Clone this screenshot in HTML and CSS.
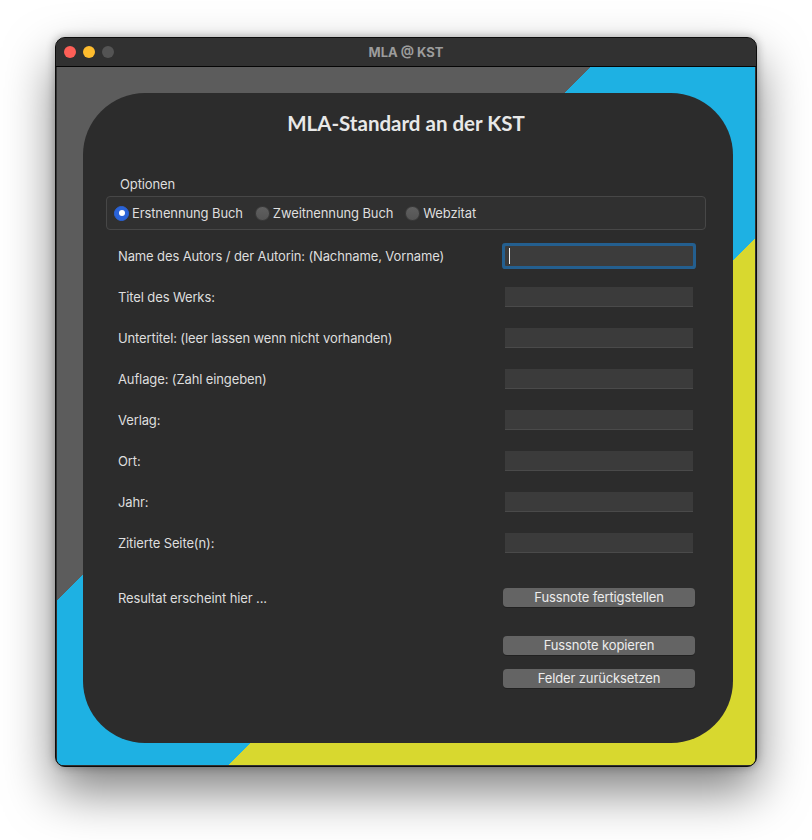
FILE: index.html
```html
<!DOCTYPE html>
<html lang="de">
<head>
<meta charset="utf-8">
<title>MLA @ KST</title>
<link rel="stylesheet" href="styles.css">
</head>
<body>
<div class="window">
  <div class="titlebar">
    <div class="lights">
      <span class="light red"></span>
      <span class="light yellow"></span>
      <span class="light grey"></span>
    </div>
    <div class="wtitle">MLA @ KST</div>
  </div>
  <div class="content">
    <div class="card">
      <h1 class="heading">MLA-Standard an der KST</h1>
      <div class="group-label">Optionen</div>
      <div class="group">
        <label class="radio"><span class="dot on"></span>Erstnennung Buch</label>
        <label class="radio"><span class="dot"></span>Zweitnennung Buch</label>
        <label class="radio"><span class="dot"></span>Webzitat</label>
      </div>
      <div class="rows">
        <div class="row"><span class="lbl">Name des Autors / der Autorin: (Nachname, Vorname)</span><div class="field focus"><span class="caret"></span></div></div>
        <div class="row"><span class="lbl">Titel des Werks:</span><div class="field"></div></div>
        <div class="row"><span class="lbl">Untertitel: (leer lassen wenn nicht vorhanden)</span><div class="field"></div></div>
        <div class="row"><span class="lbl">Auflage: (Zahl eingeben)</span><div class="field"></div></div>
        <div class="row"><span class="lbl">Verlag:</span><div class="field"></div></div>
        <div class="row"><span class="lbl">Ort:</span><div class="field"></div></div>
        <div class="row"><span class="lbl">Jahr:</span><div class="field"></div></div>
        <div class="row"><span class="lbl">Zitierte Seite(n):</span><div class="field"></div></div>
      </div>
      <div class="result-row">
        <span class="lbl">Resultat erscheint hier ...</span>
        <button class="btn">Fussnote fertigstellen</button>
      </div>
      <div class="actions">
        <button class="btn">Fussnote kopieren</button>
        <button class="btn">Felder zurücksetzen</button>
      </div>
    </div>
  </div>
</div>
</body>
</html>
```
FILE: styles.css
```css
html, body {
  margin: 0;
  padding: 0;
  background: #ffffff;
}
html {
  height: 100%;
}
body {
  min-height: 840px;
  box-sizing: border-box;
  padding: 37px 0 0 55px;
  font-family: "Inter", "Liberation Sans", sans-serif;
  font-size: 13px;
  letter-spacing: -0.12px;
  overflow: hidden;
}
.window {
  width: 700px;
  border: 1px solid #0c0c0c;
  border-radius: 10px;
  overflow: hidden;
  background: #303030;
  box-shadow: 0 24px 50px rgba(0,0,0,0.5), 0 0 10px rgba(0,0,0,0.3);
}
.titlebar {
  height: 28px;
  border-bottom: 1px solid #050505;
  background: #313131;
  display: flex;
  align-items: center;
  position: relative;
}
.lights {
  display: flex;
  gap: 7px;
  padding-left: 8px;
}
.light {
  width: 12px;
  height: 12px;
  border-radius: 50%;
  display: block;
}
.red { background: #fe5f57; }
.yellow { background: #febc2e; }
.grey { background: #545454; }
.wtitle {
  position: absolute;
  left: 0;
  right: 0;
  top: 0;
  line-height: 28px;
  text-align: center;
  color: #9c9c9c;
  font-weight: 700;
  font-size: 13px;
  letter-spacing: 0;
  pointer-events: none;
}
.content {
  width: 698px;
  height: 698px;
  margin: 0 1px 1px;
  background: linear-gradient(135deg, #5c5c5c 377.5px, #1eb1e3 377.5px, #1eb1e3 614.5px, #d8d82f 614.5px);
  padding: 26px;
  box-sizing: border-box;
}
.card {
  width: 650px;
  height: 650px;
  background: #2c2c2c;
  border-radius: 62px;
  padding: 18px 27px 0 23px;
  box-sizing: border-box;
  color: #dedede;
}
.heading {
  margin: 0;
  height: 24px;
  line-height: 24px;
  text-align: center;
  font-family: "Lato", "DejaVu Sans", sans-serif;
  font-weight: 700;
  font-size: 20.5px;
  letter-spacing: 0;
  color: #e8e8e8;
}
.group-label {
  margin-top: 41px;
  padding-left: 14px;
  line-height: 16px;
  height: 16px;
}
.group {
  margin-top: 4px;
  height: 34px;
  box-sizing: border-box;
  border: 1px solid #474747;
  border-radius: 4px;
  background: #303030;
  display: flex;
  align-items: center;
  padding-left: 7px;
  gap: 12px;
}
.radio {
  display: flex;
  align-items: center;
  gap: 3px;
}
.dot {
  width: 15px;
  height: 15px;
  border-radius: 50%;
  background: linear-gradient(#606060, #545454);
  box-sizing: border-box;
  border: 0.5px solid #3a3a3a;
  position: relative;
}
.dot.on {
  background: #2a63d8;
  border-color: #2a63d8;
}
.dot.on::after {
  content: "";
  position: absolute;
  width: 6px;
  height: 6px;
  border-radius: 50%;
  background: #fff;
  left: 50%;
  top: 50%;
  transform: translate(-50%, -50%);
}
.rows {
  margin-top: 5px;
  padding-left: 12px;
  margin-right: 13px;
}
.row {
  height: 41px;
  display: flex;
  align-items: center;
  justify-content: space-between;
}
.field {
  width: 188px;
  height: 20px;
  box-sizing: border-box;
  background: #3b3b3b;
  border-bottom: 1px solid #4a4a4a;
  position: relative;
}
.field.focus {
  box-shadow: 0 0 0 3px #245f8f;
  border-radius: 1px;
  border-bottom: none;
  background: #3c3c3c;
}
.caret {
  position: absolute;
  left: 4px;
  top: 2px;
  width: 1px;
  height: 16px;
  background: #f0f0f0;
}
.lbl {
  color: #dedede;
  line-height: 16px;
}
.result-row {
  margin-top: 25px;
  padding-left: 12px;
  margin-right: 11px;
  display: flex;
  align-items: center;
  justify-content: space-between;
}
.btn {
  width: 192px;
  height: 19px;
  padding: 0;
  border: none;
  border-radius: 4px;
  background: #646464;
  color: #ececec;
  font-family: inherit;
  font-size: 13px;
  letter-spacing: -0.12px;
  line-height: 19px;
  box-shadow: 0 1px 0 rgba(0,0,0,0.25);
}
.actions {
  display: flex;
  flex-direction: column;
  align-items: flex-end;
  margin-top: 29px;
  margin-right: 11px;
  gap: 14px;
}
```
